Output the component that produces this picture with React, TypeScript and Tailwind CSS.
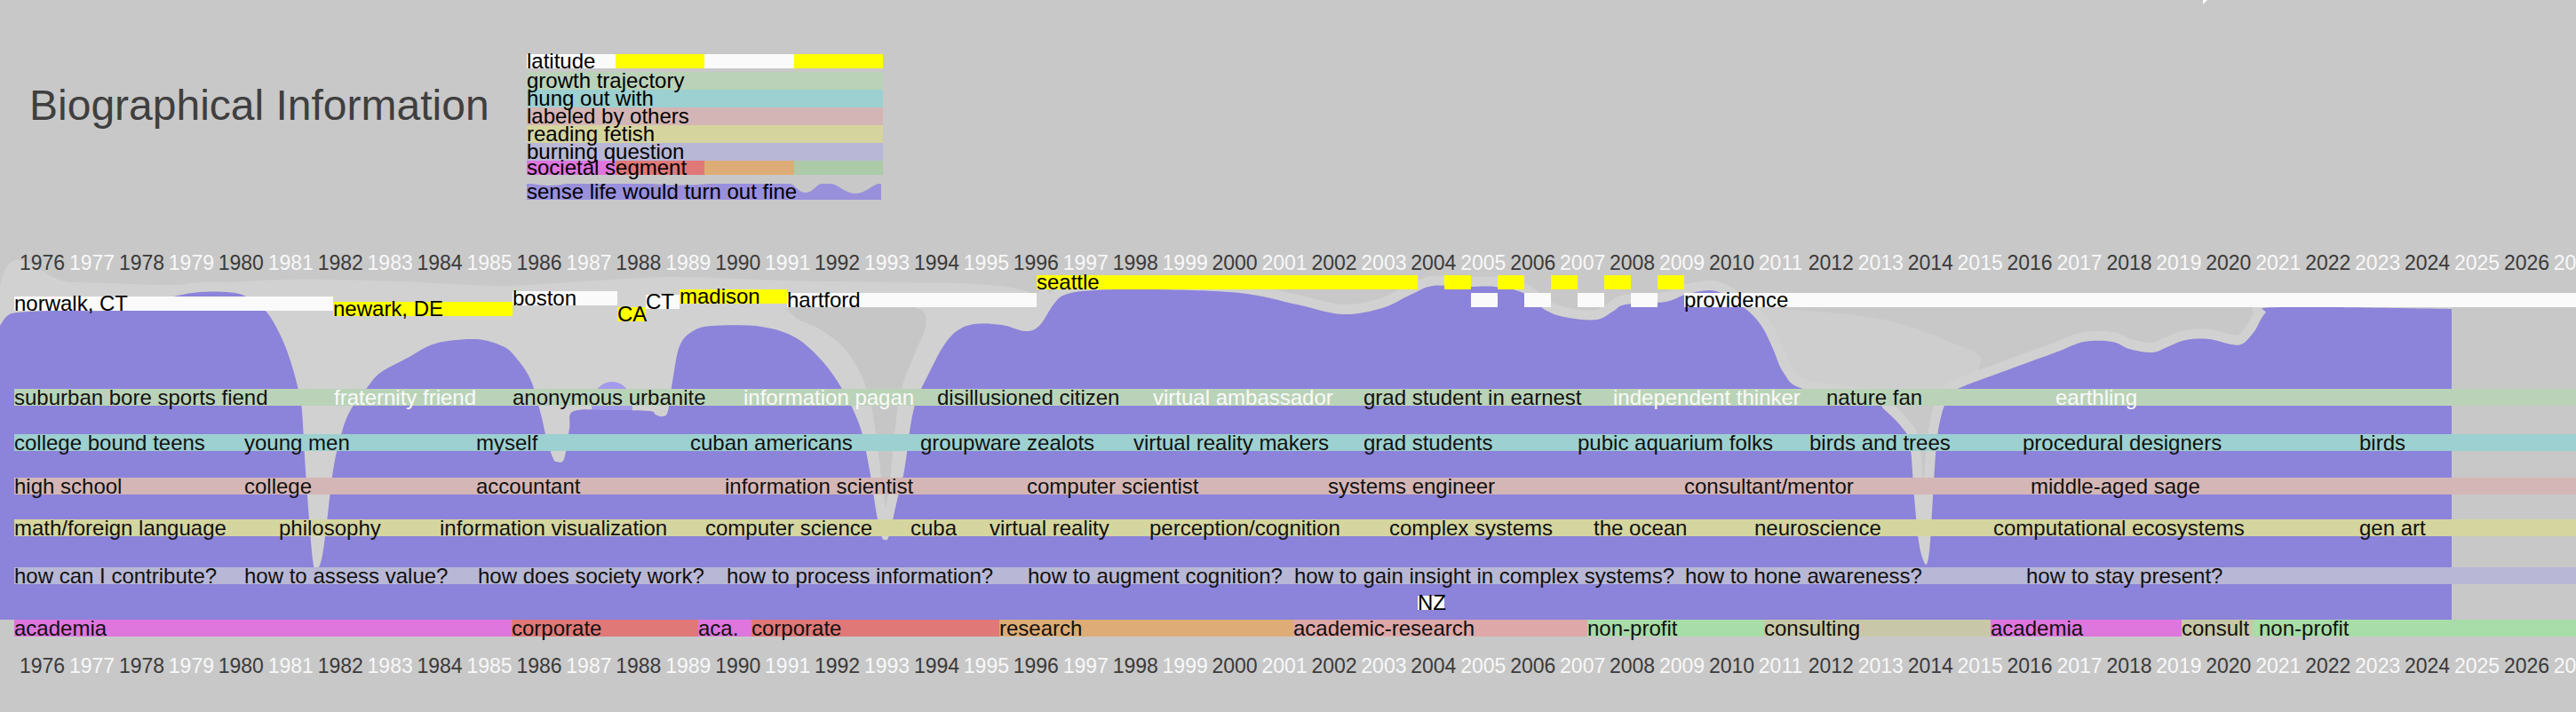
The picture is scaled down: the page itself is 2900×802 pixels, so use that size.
import React from "react"

// x positions (px) of each label along the timeline, measured from the 1976 origin
type Seg = [number, string, boolean?]

const YEARS = Array.from({ length: 52 }, (_, i) => 1976 + i)

const growth: Seg[] = [
  [16, "suburban bore sports fiend"],
  [376, "fraternity friend", true],
  [577, "anonymous urbanite"],
  [837, "information pagan", true],
  [1055, "disillusioned citizen"],
  [1298, "virtual ambassador", true],
  [1535, "grad student in earnest"],
  [1816, "independent thinker", true],
  [2056, "nature fan"],
  [2314, "earthling", true],
]

const hungOut: Seg[] = [
  [16, "college bound teens"],
  [275, "young men"],
  [536, "myself"],
  [777, "cuban americans"],
  [1036, "groupware zealots"],
  [1276, "virtual reality makers"],
  [1535, "grad students"],
  [1776, "pubic aquarium folks"],
  [2037, "birds and trees"],
  [2277, "procedural designers"],
  [2656, "birds"],
]

const labeled: Seg[] = [
  [16, "high school"],
  [275, "college"],
  [536, "accountant"],
  [816, "information scientist"],
  [1156, "computer scientist"],
  [1495, "systems engineer"],
  [1896, "consultant/mentor"],
  [2286, "middle-aged sage"],
]

const reading: Seg[] = [
  [16, "math/foreign language"],
  [314, "philosophy"],
  [495, "information visualization"],
  [794, "computer science"],
  [1025, "cuba"],
  [1114, "virtual reality"],
  [1294, "perception/cognition"],
  [1564, "complex systems"],
  [1794, "the ocean"],
  [1975, "neuroscience"],
  [2244, "computational ecosystems"],
  [2656, "gen art"],
]

const burning: Seg[] = [
  [16, "how can I contribute?"],
  [275, "how to assess value?"],
  [538, "how does society work?"],
  [818, "how to process information?"],
  [1157, "how to augment cognition?"],
  [1457, "how to gain insight in complex systems?"],
  [1897, "how to hone awareness?"],
  [2281, "how to stay present?"],
]

const societal: [number, number, string, string][] = [
  [16, 576, "academia", "bg-[#de76de]"],
  [576, 786, "corporate", "bg-[#e07878]"],
  [786, 846, "aca.", "bg-[#de76de]"],
  [846, 1125, "corporate", "bg-[#e07878]"],
  [1125, 1456, "research", "bg-[#deac76]"],
  [1456, 1787, "academic-research", "bg-[#dea8a8]"],
  [1787, 1986, "non-profit", "bg-[#a8dca8]"],
  [1986, 2241, "consulting", "bg-[#c8c8a8]"],
  [2241, 2456, "academia", "bg-[#de76de]"],
  [2456, 2536, "consult", "bg-[#c8c8a8]"],
  [2536, 2900, "non-profit", "bg-[#a8dca8] pl-[7px]"],
]

// places: start, end, top (latitude), yellow?, label
const places: [number, number, number, boolean, string][] = [
  [16, 375, 334, false, "norwalk, CT"],
  [375, 577, 340, true, "newark, DE"],
  [577, 695, 328, false, "boston"],
  [695, 727, 346, true, "CA"],
  [727, 765, 332, false, "CT"],
  [765, 886, 326, true, "madison"],
  [886, 1167, 330, false, "hartford"],
  [1167, 1596, 310, true, "seattle"],
  [1596, 1626, 671, false, "NZ"],
  [1626, 1656, 310, true, ""],
  [1656, 1686, 330, false, ""],
  [1686, 1716, 310, true, ""],
  [1716, 1746, 330, false, ""],
  [1746, 1776, 310, true, ""],
  [1776, 1806, 330, false, ""],
  [1806, 1836, 310, true, ""],
  [1836, 1866, 330, false, ""],
  [1866, 1896, 310, true, ""],
  [1896, 2900, 330, false, "providence"],
]

// top edge of the "sense life would turn out fine" area
const senseTop = [
  [0, 367], [8, 356], [20, 352], [60, 350], [120, 350], [153, 347], [175, 340], [200, 333], [225, 329],
  [255, 329], [275, 333], [293, 345], [305, 358], [319, 385], [329, 413], [336, 440], [340, 463],
  [344, 530], [352, 630], [357, 640], [362, 630], [367, 597], [375, 530], [384, 490], [394, 463],
  [413, 437], [428, 420], [459, 403], [490, 387], [535, 382], [566, 390], [581, 403], [597, 427],
  [608, 463], [616, 497], [623, 517], [627, 520], [635, 517], [641, 483], [646, 463], [690, 462],
  [731, 463], [738, 467], [746, 469], [752, 463], [757, 430], [765, 390], [780, 373], [803, 367],
  [857, 368], [895, 380], [926, 407], [949, 440], [968, 480], [979, 530], [987, 580], [992, 603],
  [996, 608], [1001, 603], [1010, 563], [1018, 530], [1025, 480], [1032, 450], [1046, 420],
  [1062, 390], [1077, 373], [1097, 365], [1128, 366], [1154, 373], [1170, 367], [1186, 343],
  [1199, 332], [1231, 327], [1300, 326], [1396, 330], [1460, 343], [1511, 354], [1556, 347],
  [1588, 332], [1613, 322], [1651, 323], [1683, 323], [1715, 330], [1741, 350], [1766, 358],
  [1798, 360], [1817, 350], [1830, 343], [1875, 340], [1900, 331], [1932, 328], [1964, 347],
  [1983, 367], [1996, 393], [2008, 420], [2030, 438], [2110, 450], [2120, 460], [2140, 480],
  [2150, 500], [2155, 560], [2160, 610], [2166, 633], [2170, 633], [2173, 610], [2176, 560],
  [2180, 500], [2185, 470], [2190, 455], [2200, 440], [2251, 420], [2314, 397], [2346, 385],
  [2378, 385], [2397, 393], [2423, 397], [2442, 390], [2461, 383], [2487, 382], [2512, 388],
  [2525, 387], [2538, 373], [2550, 353], [2566, 346], [2760, 348],
]

const smooth = (pts: number[][]) => {
  let d = `M${pts[0][0]},${pts[0][1]}`
  for (let i = 0; i < pts.length - 1; i++) {
    const p0 = pts[i - 1] || pts[i]
    const p1 = pts[i]
    const p2 = pts[i + 1]
    const p3 = pts[i + 2] || p2
    const c1x = p1[0] + (p2[0] - p0[0]) / 6
    const c1y = p1[1] + (p2[1] - p0[1]) / 6
    const c2x = p2[0] - (p3[0] - p1[0]) / 6
    const c2y = p2[1] - (p3[1] - p1[1]) / 6
    d += ` C${c1x.toFixed(1)},${c1y.toFixed(1)} ${c2x.toFixed(1)},${c2y.toFixed(1)} ${p2[0]},${p2[1]}`
  }
  return d
}

const poly = (pts: number[][]) => smooth(pts) + " Z"

function SenseArea() {
  const top = smooth(senseTop)
  return (
    <svg className="absolute left-0 top-0" width={2900} height={802} viewBox="0 0 2900 802">
      <path
        d={poly([
          [0, 698], [0, 322], [80, 318], [200, 321], [320, 315], [450, 317], [560, 322], [640, 318],
          [760, 312], [880, 316], [1000, 318], [1100, 320], [1160, 330], [1185, 360], [1190, 698],
        ])}
        fill="#d1d1d1"
      />
      <path
        d={poly([
          [885, 348], [905, 343], [960, 341], [1010, 343], [1038, 350], [1042, 368], [1030, 398],
          [1013, 445], [1004, 520], [997, 590], [990, 520], [978, 445], [955, 398], [925, 372], [898, 360],
        ])}
        fill="#c6c6c6"
      />
      <path
        d={poly([
          [1975, 346], [2060, 352], [2130, 362], [2195, 385], [2230, 405], [2200, 440], [2110, 450], [2030, 438],
        ])}
        fill="#cecece"
      />
      <path d={top} fill="none" stroke="#d1d1d1" strokeWidth={22} strokeLinejoin="round" />
      <path d="M666,463 C666,441 676,430 689,430 C702,430 712,441 712,463 Z" fill="#a49bea" />
      <path d={`${top} L2760,698 L0,698 Z`} fill="#8c83da" />
      <polygon points="2480,0 2485,0 2480,5" fill="#ffffff" />
    </svg>
  )
}

function Row({ segs, bg }: { segs: Seg[]; bg: string }) {
  return (
    <div className={`flex h-[19px] ml-[16px] leading-[19px] ${bg}`}>
      {segs.map(([x, label, light], i) => {
        const next = segs[i + 1]
        return (
          <div
            key={i}
            className={`shrink-0 whitespace-nowrap ${light ? "text-[#fafafa]" : "text-[#111111]"} ${next ? "" : "flex-1"}`}
            style={next ? { width: next[0] - x } : undefined}
          >
            {label}
          </div>
        )
      })}
    </div>
  )
}

function YearAxis() {
  return (
    <div className="flex h-[20px] pl-[22px] leading-[20px] text-[23px]">
      {YEARS.map((y) => (
        <div key={y} className={`w-[55.95px] shrink-0 whitespace-nowrap ${y % 2 === 0 ? "text-[#3a3a3a]" : "text-[#f8f8f8]"}`}>
          {y}
        </div>
      ))}
    </div>
  )
}

function Legend() {
  return (
    <div className="w-[401px] text-[24px] text-black">
      <div className="h-[16px] leading-[16px] whitespace-nowrap bg-[linear-gradient(90deg,#fafafa_25%,#ffff00_25%_50%,#fafafa_50%_75%,#ffff00_75%)]">
        latitude
      </div>
      <div className="mt-[4px] h-[20px] leading-[20px] whitespace-nowrap bg-[#bad2b8]">growth trajectory</div>
      <div className="h-[20px] leading-[20px] whitespace-nowrap bg-[#9dd0d0]">hung out with</div>
      <div className="h-[20px] leading-[20px] whitespace-nowrap bg-[#d4b5b5]">labeled by others</div>
      <div className="h-[20px] leading-[20px] whitespace-nowrap bg-[#d5d49f]">reading fetish</div>
      <div className="h-[20px] leading-[20px] whitespace-nowrap bg-[#b8b7d5]">burning question</div>
      <div className="h-[16px] leading-[16px] whitespace-nowrap bg-[linear-gradient(90deg,#de76de_25%,#e07878_25%_50%,#deac76_50%_75%,#abcaa8_75%)]">
        societal segment
      </div>
      <div className="relative mt-[10px] h-[18px] leading-[18px] whitespace-nowrap">
        <svg className="absolute left-0 top-0" width={401} height={18} viewBox="0 0 401 18">
          <path
            d="M0,0 L6,0 Q25,4 45,0 L140,0 Q172,3 204,0 L296,0 C302,0 305,10 314,10 C323,10 326,0 332,0 L343,0 C350,0 358,11 370,11 C382,11 390,0 396,0 L399,0 L399,18 L0,18 Z"
            fill="#9990dc"
          />
        </svg>
        <span className="relative">sense life would turn out fine</span>
      </div>
    </div>
  )
}

export default function App() {
  return (
    <div className="relative w-[2900px] h-[802px] overflow-hidden bg-[#c8c8c8] font-['Liberation_Sans',Arial,sans-serif] text-[24px]">
      <SenseArea />

      <div className="relative flex h-[286px] pl-[33px] pt-[61px]">
        <h1 className="w-[560px] mt-[34px] text-[48px] leading-none text-[#3f3f3f] whitespace-nowrap">
          Biographical Information
        </h1>
        <Legend />
      </div>

      <div className="relative">
        <YearAxis />

        <div className="relative h-[60px]">
          {places.map(([x1, x2, top, yellow, label], i) => (
            <div
              key={i}
              className={`absolute h-[16px] leading-[16px] whitespace-nowrap text-black ${yellow ? "bg-[#ffff00]" : "bg-[#fafafa]"}`}
              style={{ left: x1, top: top - 306, width: x2 - x1 }}
            >
              {label}
            </div>
          ))}
        </div>

        <div className="mt-[72px]">
          <Row segs={growth} bg="bg-[#bad3b8]" />
        </div>
        <div className="mt-[32px]">
          <Row segs={hungOut} bg="bg-[#9dd0d0]" />
        </div>
        <div className="mt-[30px]">
          <Row segs={labeled} bg="bg-[#d4b6b6]" />
        </div>
        <div className="mt-[28px]">
          <Row segs={reading} bg="bg-[#d5d5a0]" />
        </div>
        <div className="mt-[35px]">
          <Row segs={burning} bg="bg-[#b8b7d6]" />
        </div>

        <div className="mt-[40px] flex h-[19px] ml-[16px] leading-[19px] text-[#111111]">
          {societal.map(([x1, x2, label, bg], i) => (
            <div key={i} className={`shrink-0 whitespace-nowrap ${bg}`} style={{ width: x2 - x1 }}>
              {label}
            </div>
          ))}
        </div>

        <div className="mt-[23px]">
          <YearAxis />
        </div>
      </div>
    </div>
  )
}
